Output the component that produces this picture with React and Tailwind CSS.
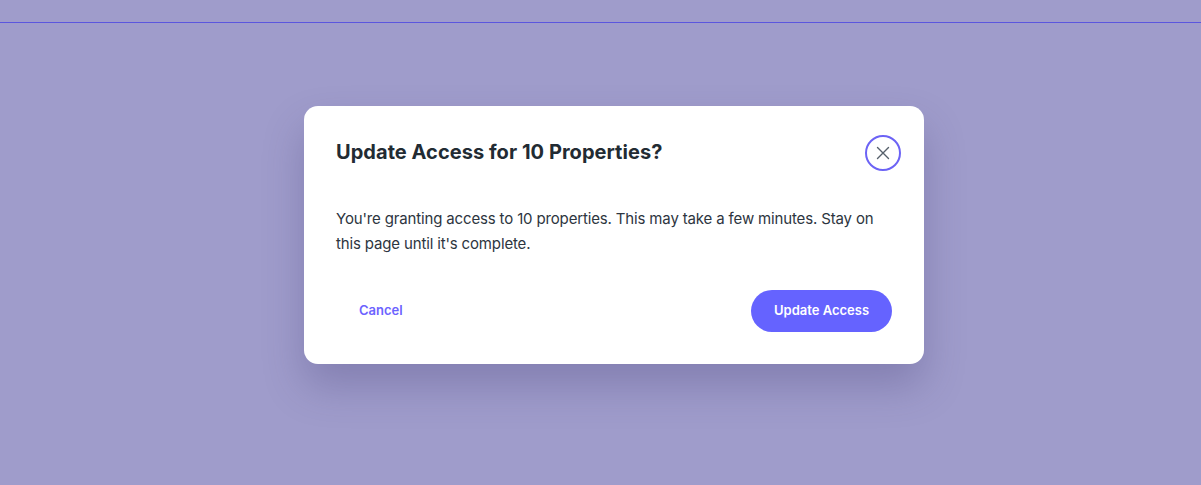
import React from 'react';

export default function App() {
  return (
    <div
      className="w-full h-[485px] bg-[#9f9ccb] flex flex-col overflow-hidden"
      style={{ fontFamily: 'Inter, "Open Sans", sans-serif' }}
    >
      <div className="h-[23px] border-b border-[#5b56de] shrink-0" />
      <div className="flex justify-center pl-[27px] pt-[83px]">
        <div className="w-[620px] h-[258px] bg-white rounded-[14px] shadow-[0_22px_40px_rgba(60,55,110,0.28)] pl-[32px] pr-[23px] pt-[28px] flex flex-col">
          <div className="flex items-start justify-between">
            <h2 className="text-[20px] font-bold text-[#222b33] leading-[28px] pt-[4px] tracking-[0.05px]">
              Update Access for 10 Properties?
            </h2>
            <button className="mt-[1px] w-[36px] h-[36px] rounded-full border-2 border-[#6c63f5] flex items-center justify-center">
              <svg width="14" height="14" viewBox="0 0 14 14" fill="none" stroke="#56606b" strokeWidth="1.4" strokeLinecap="round">
                <path d="M1.5 1.5 12.5 12.5M12.5 1.5 1.5 12.5" />
              </svg>
            </button>
          </div>
          <p className="mt-[35px] text-[15px] leading-[25px] text-[#2d3540] pr-[19px] tracking-[-0.15px]">
            You're granting access to 10 properties. This may take a few minutes. Stay on this page until it's complete.
          </p>
          <div className="mt-[34px] flex items-center justify-between pr-[9px]">
            <button className="text-[13px] font-semibold text-[#6c63ff] pl-[23px]">Cancel</button>
            <button className="w-[141px] h-[42px] rounded-full bg-[#6563ff] text-white text-[13px] font-semibold">
              Update Access
            </button>
          </div>
        </div>
      </div>
    </div>
  );
}
